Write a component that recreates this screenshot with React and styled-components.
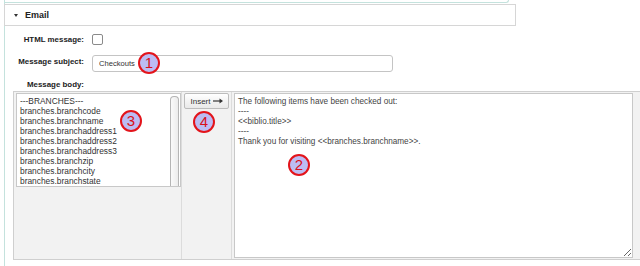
import styled, { createGlobalStyle } from "styled-components";

const GlobalStyle = createGlobalStyle`
  html, body {
    margin: 0;
    padding: 0;
    background: #fff;
    overflow: hidden;
  }
  body {
    font-family: "Liberation Sans", Arial, sans-serif;
    color: #333;
  }
`;

const fields = [
  "---BRANCHES---",
  "branches.branchcode",
  "branches.branchname",
  "branches.branchaddress1",
  "branches.branchaddress2",
  "branches.branchaddress3",
  "branches.branchzip",
  "branches.branchcity",
  "branches.branchstate",
];

const body = `The following items have been checked out:
----
<<biblio.title>>
----
Thank you for visiting <<branches.branchname>>.`;

const marks = [
  { n: 1, x: 149, y: 63 },
  { n: 3, x: 131, y: 121 },
  { n: 4, x: 204, y: 122 },
  { n: 2, x: 299, y: 165 },
];

const ArrowIcon = () => (
  <svg width="10" height="6" viewBox="0 0 10 6">
    <path d="M0 3H7.5" stroke="#333" strokeWidth="1.2" />
    <path d="M6.5 0.6L10 3L6.5 5.4Z" fill="#333" />
  </svg>
);

const App = () => {
  return (
    <Page>
      <GlobalStyle />
      <Frame>
        <TopStub />
        <SectionHeader>
          <Caret />
          <span>Email</span>
        </SectionHeader>
        <FormRow $top={8}>
          <Label>HTML message:</Label>
          <CheckBox type="checkbox" />
        </FormRow>
        <FormRow $top={10} $start>
          <Label $pad={2}>Message subject:</Label>
          <SubjectInput defaultValue="Checkouts" />
        </FormRow>
        <BodyLabel>Message body:</BodyLabel>
        <BodyTable>
          <FieldCell>
            <FieldList>
              <FieldItems>
                {fields.map((f) => (
                  <FieldItem key={f}>{f}</FieldItem>
                ))}
              </FieldItems>
              <ScrollTrack>
                <ScrollThumb />
              </ScrollTrack>
            </FieldList>
          </FieldCell>
          <ButtonCell>
            <InsertButton>
              Insert <ArrowIcon />
            </InsertButton>
          </ButtonCell>
          <TextCell>
            <BodyText defaultValue={body} spellCheck={false} />
          </TextCell>
        </BodyTable>
      </Frame>
      {marks.map((m) => (
        <Marker key={m.n} style={{ left: m.x - 11, top: m.y - 11 }}>
          {m.n}
        </Marker>
      ))}
    </Page>
  );
};

export default App;

const Page = styled.div`
  position: relative;
  width: 640px;
  height: 266px;
  overflow: hidden;
`;
const Frame = styled.div`
  margin-left: 4px;
  height: 266px;
  border-left: 1px solid #c4e2dd;
`;
const TopStub = styled.div`
  width: 503px;
  height: 2px;
  border-bottom: 1px solid #c4e2dd;
  border-right: 1px solid #c4e2dd;
  border-bottom-right-radius: 4px;
`;
const SectionHeader = styled.div`
  margin: 1px 0 0 -1px;
  width: 501px;
  height: 20px;
  border: 1px solid #d6d6d6;
  background: #fff;
  display: flex;
  align-items: center;
  gap: 7px;
  padding-left: 9px;
  font-size: 9px;
  font-weight: bold;
  color: #222;
`;
const Caret = styled.span`
  width: 0;
  height: 0;
  border-left: 2px solid transparent;
  border-right: 2px solid transparent;
  border-top: 3px solid #333;
`;
const FormRow = styled.div`
  display: flex;
  align-items: ${(p) => (p.$start ? "flex-start" : "center")};
  gap: 8px;
  margin-top: ${(p) => p.$top}px;
`;
const Label = styled.div`
  width: 79px;
  text-align: right;
  font-size: 7.9px;
  font-weight: bold;
  color: #222;
  padding-top: ${(p) => p.$pad || 0}px;
`;
const CheckBox = styled.input`
  appearance: none;
  margin: 0;
  width: 11px;
  height: 11px;
  border: 1px solid #8a8a8a;
  border-radius: 2px;
  background: #fff;
`;
const SubjectInput = styled.input`
  box-sizing: border-box;
  width: 301px;
  height: 17px;
  margin: 0;
  padding: 0 6px;
  border: 1px solid #c4c4c4;
  border-radius: 3px;
  font-family: "Liberation Sans", Arial, sans-serif;
  font-size: 7.6px;
  color: #333;
  background: #fff;
  outline: none;
`;
const BodyLabel = styled.div`
  width: 79px;
  text-align: right;
  font-size: 7.9px;
  font-weight: bold;
  color: #222;
  margin-top: 8px;
`;
const BodyTable = styled.div`
  margin: 2px 0 0 8px;
  width: 660px;
  height: 167px;
  border: 1px solid #cfcfcf;
  background: #f2f2f2;
  display: grid;
  grid-template-columns: 168px 50px 1fr;
`;
const FieldCell = styled.div`
  border-right: 1px solid #dcdcdc;
  padding: 1px 0 0 2px;
`;
const FieldList = styled.div`
  box-sizing: border-box;
  width: 165px;
  height: 94px;
  border: 1px solid #c8c8c8;
  background: #fff;
  display: flex;
  overflow: hidden;
`;
const FieldItems = styled.div`
  flex: 1;
  padding: 2px 0 0 3px;
`;
const FieldItem = styled.div`
  font-size: 8.4px;
  line-height: 10px;
  color: #333;
  white-space: nowrap;
`;
const ScrollTrack = styled.div`
  width: 9px;
  padding: 2px 1px 0 0;
  display: flex;
`;
const ScrollThumb = styled.div`
  flex: 1;
  border: 1px solid #b5b5b5;
  border-bottom: none;
  border-radius: 4px 4px 0 0;
  background: linear-gradient(90deg, #fafafa, #ececec);
`;
const ButtonCell = styled.div`
  border-right: 1px solid #dcdcdc;
  padding: 1px 0 0 2px;
`;
const InsertButton = styled.button`
  box-sizing: border-box;
  width: 45px;
  height: 16px;
  margin: 0;
  padding: 0;
  border: 1px solid #bcbcbc;
  border-radius: 2px;
  background: linear-gradient(#ffffff, #e9e9e9);
  font-family: "Liberation Sans", Arial, sans-serif;
  font-size: 8px;
  color: #333;
  display: flex;
  align-items: center;
  justify-content: center;
  gap: 2px;
`;
const TextCell = styled.div`
  padding: 1px 0 0 2px;
`;
const BodyText = styled.textarea`
  box-sizing: border-box;
  display: block;
  width: 399px;
  height: 165px;
  margin: 0;
  padding: 3px 3px;
  border: 1px solid #c8c8c8;
  background: #fff;
  font-family: "Liberation Sans", Arial, sans-serif;
  font-size: 8.2px;
  line-height: 10px;
  color: #444;
  resize: both;
  outline: none;
`;
const Marker = styled.div`
  position: absolute;
  box-sizing: border-box;
  width: 22px;
  height: 22px;
  border: 2px solid #e3141b;
  border-radius: 50%;
  background: #bcbcf3;
  color: #d9101a;
  font-family: "Liberation Sans", Arial, sans-serif;
  font-size: 15px;
  line-height: 18px;
  text-align: center;
`;
